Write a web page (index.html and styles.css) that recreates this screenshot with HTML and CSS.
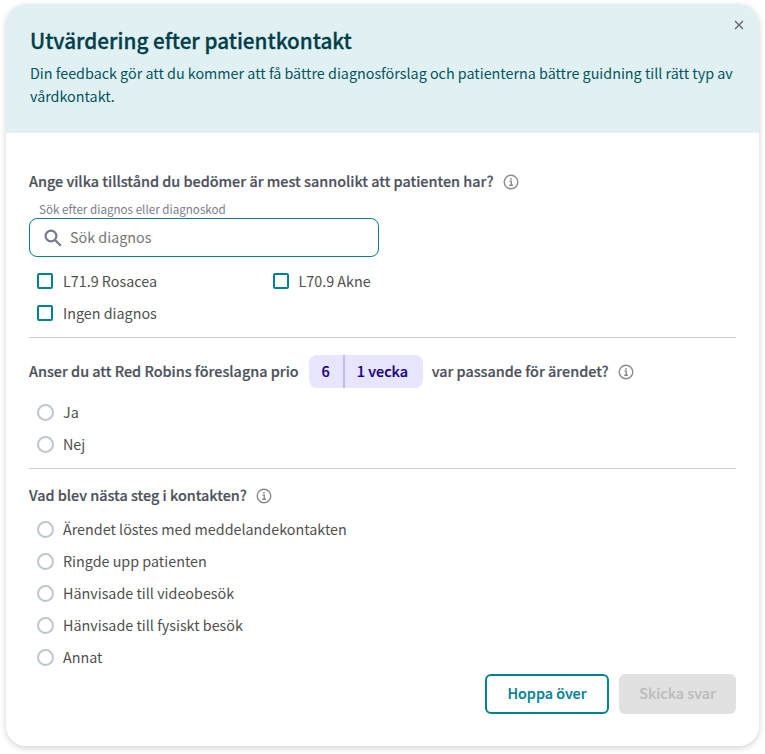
FILE: index.html
```html
<!DOCTYPE html>
<html lang="sv">
<head>
    <meta charset="UTF-8">
    <meta name="viewport" content="width=device-width, initial-scale=1.0">
    <title>Utvärdering efter patientkontakt</title>
    <link rel="stylesheet" href="styles.css">
</head>
<body>
    <div class="modal">
        <!-- Header -->
        <div class="modal-header">
            <h1>Utvärdering efter patientkontakt</h1>
            <p>Din feedback gör att du kommer att få bättre diagnosförslag och patienterna bättre guidning till rätt typ av vårdkontakt.</p>
            <button type="button" class="close" aria-label="Stäng">
                <svg width="10" height="10" viewBox="0 0 10 10"><path d="M1 1l8 8M9 1l-8 8"/></svg>
            </button>
        </div>

        <form class="modal-body">
            <!-- Diagnosis -->
            <div class="question">
                <h2><span class="text">Ange vilka tillstånd du bedömer är mest sannolikt att patienten har?</span>
                    <svg class="info" viewBox="0 0 16 16"><circle cx="8" cy="8" r="6.8"/><path d="M6.4 7.1h1.9v4M6.2 11.2h3.8"/><rect x="7.1" y="4.1" width="1.6" height="1.6"/></svg>
                </h2>
                <label class="search-label" for="search">Sök efter diagnos eller diagnoskod</label>
                <div class="search-box">
                    <svg class="search-icon" width="18" height="18" viewBox="0 0 18 18"><circle cx="7" cy="7" r="5.4"/><path d="M11 11l5.8 5.8"/></svg>
                    <input type="text" id="search" placeholder="Sök diagnos">
                </div>
                <div class="diagnoses">
                    <label class="option"><input type="checkbox" class="checkbox"><span>L71.9 Rosacea</span></label>
                    <label class="option"><input type="checkbox" class="checkbox"><span>L70.9 Akne</span></label>
                    <label class="option"><input type="checkbox" class="checkbox"><span>Ingen diagnos</span></label>
                </div>
            </div>

            <!-- Priority -->
            <div class="question priority">
                <h2><span class="text">Anser du att Red Robins föreslagna prio</span>
                    <span class="badge"><span class="badge-level">6</span><span class="badge-time">1 vecka</span></span>
                    <span class="text">var passande för ärendet?</span>
                    <svg class="info" viewBox="0 0 16 16"><circle cx="8" cy="8" r="6.8"/><path d="M6.4 7.1h1.9v4M6.2 11.2h3.8"/><rect x="7.1" y="4.1" width="1.6" height="1.6"/></svg>
                </h2>
                <label class="option"><input type="radio" name="prio" class="radio"><span>Ja</span></label>
                <label class="option"><input type="radio" name="prio" class="radio"><span>Nej</span></label>
            </div>

            <!-- Next step -->
            <div class="question next-step">
                <h2><span class="text">Vad blev nästa steg i kontakten?</span>
                    <svg class="info" viewBox="0 0 16 16"><circle cx="8" cy="8" r="6.8"/><path d="M6.4 7.1h1.9v4M6.2 11.2h3.8"/><rect x="7.1" y="4.1" width="1.6" height="1.6"/></svg>
                </h2>
                <label class="option"><input type="radio" name="step" class="radio"><span>Ärendet löstes med meddelandekontakten</span></label>
                <label class="option"><input type="radio" name="step" class="radio"><span>Ringde upp patienten</span></label>
                <label class="option"><input type="radio" name="step" class="radio"><span>Hänvisade till videobesök</span></label>
                <label class="option"><input type="radio" name="step" class="radio"><span>Hänvisade till fysiskt besök</span></label>
                <label class="option"><input type="radio" name="step" class="radio"><span>Annat</span></label>
            </div>

            <div class="form-actions">
                <button type="button" class="btn btn-outline">Hoppa över</button>
                <button type="submit" class="btn" disabled>Skicka svar</button>
            </div>
        </form>
    </div>
</body>
</html>
```

FILE: styles.css
```css
* {
    box-sizing: border-box;
}

body {
    font-family: "Noto Sans CJK SC", "Noto Sans", sans-serif;
    font-size: 14.33px;
    margin: 0;
    padding: 4px 6px 8px;
    background-color: #fff;
    color: #4f4f4f;
}

.modal {
    position: relative;
    height: 742px;
    border-radius: 20px;
    background-color: #fff;
    box-shadow: 0 2px 6px rgba(0, 0, 0, 0.18);
    overflow: hidden;
}

.modal-header {
    height: 129px;
    padding: 20px 20px 0 24px;
    background-color: #e1f0f3;
    color: #005561;
}

.modal-header h1 {
    margin: 0 0 5px;
    color: #003f4a;
    font-size: 20.7px;
    font-weight: 500;
    line-height: 32px;
    -webkit-text-stroke: 0.3px;
}

.modal-header p {
    margin: 0;
    line-height: 23px;
}

.close {
    position: absolute;
    top: 16px;
    right: 15px;
    width: 10px;
    height: 10px;
    padding: 0;
    border: none;
    background: none;
    cursor: pointer;
}

.close svg {
    display: block;
    fill: none;
    stroke: #666;
    stroke-width: 1.4;
}

.modal-body {
    padding: 37px 23px 0;
}

.question h2 {
    display: flex;
    align-items: center;
    height: 24px;
    margin: 0;
    color: #4c515c;
    font-size: 14.4px;
    font-weight: 500;
    line-height: 24px;
    -webkit-text-stroke: 0.2px;
}

.question .text {
    padding-bottom: 2px;
}

.info {
    width: 16px;
    height: 16px;
    margin-left: 9.5px;
    fill: none;
    stroke: #8b8b93;
    stroke-width: 1.4;
}

.info rect {
    fill: #8b8b93;
    stroke: none;
}

.search-label {
    display: block;
    margin: 7px 0 1px 10px;
    color: #7b7b8d;
    font-size: 11.63px;
    line-height: 16px;
}

.search-box {
    display: flex;
    align-items: center;
    width: 350px;
    height: 39px;
    padding-left: 14px;
    border: 1px solid #008291;
    border-radius: 8px;
}

.search-icon {
    margin-right: 8px;
    fill: none;
    stroke: #747a89;
    stroke-width: 2.2;
}

.search-box input {
    flex: 1;
    min-width: 0;
    padding: 0 0 2px;
    border: none;
    outline: none;
    font: inherit;
}

.search-box input::placeholder {
    color: #757575;
}

.diagnoses {
    display: grid;
    grid-template-columns: 235.5px 236px;
    padding: 8px 0;
}

.option {
    display: flex;
    align-items: center;
    height: 32px;
    padding-left: 8px;
}

.option span {
    padding-bottom: 1px;
}

.checkbox,
.radio {
    appearance: none;
    width: 16px;
    height: 16px;
    margin: 0 10px 0 0;
    border: 2px solid #008291;
    border-radius: 2px;
}

.radio {
    width: 17px;
    height: 17px;
    margin: 0 9.5px 0 -0.5px;
    border-color: #bdc7ce;
    border-radius: 50%;
}

.priority,
.next-step {
    border-top: 1px solid #ccc;
}

.priority {
    padding: 17px 0 8px;
}

.question.priority h2 {
    height: 33px;
    margin-bottom: 8px;
}

.badge {
    display: flex;
    height: 33px;
    margin: 0 8.5px 0 10px;
    border-radius: 8px;
    background-color: #e8e5ff;
    color: #1a007f;
    line-height: 32px;
    text-align: center;
}

.badge-level {
    width: 36px;
    border-right: 2px solid #c3bce8;
}

.badge-time {
    width: 78.5px;
    padding-right: 3px;
}

.next-step {
    padding-top: 15px;
}

.question.next-step h2 {
    margin-bottom: 5px;
}

.form-actions {
    display: flex;
    justify-content: flex-end;
    gap: 10px;
    margin-top: 0.5px;
}

.btn {
    width: 117px;
    height: 40px;
    padding: 0 0 3px;
    border: none;
    border-radius: 6px;
    background-color: #e1e1e1;
    color: #bdbdbd;
    font: inherit;
    font-weight: 500;
    -webkit-text-stroke: 0.2px;
}

.btn-outline {
    width: 124px;
    border: 2px solid #008291;
    background-color: #fff;
    color: #008291;
    cursor: pointer;
}
```
